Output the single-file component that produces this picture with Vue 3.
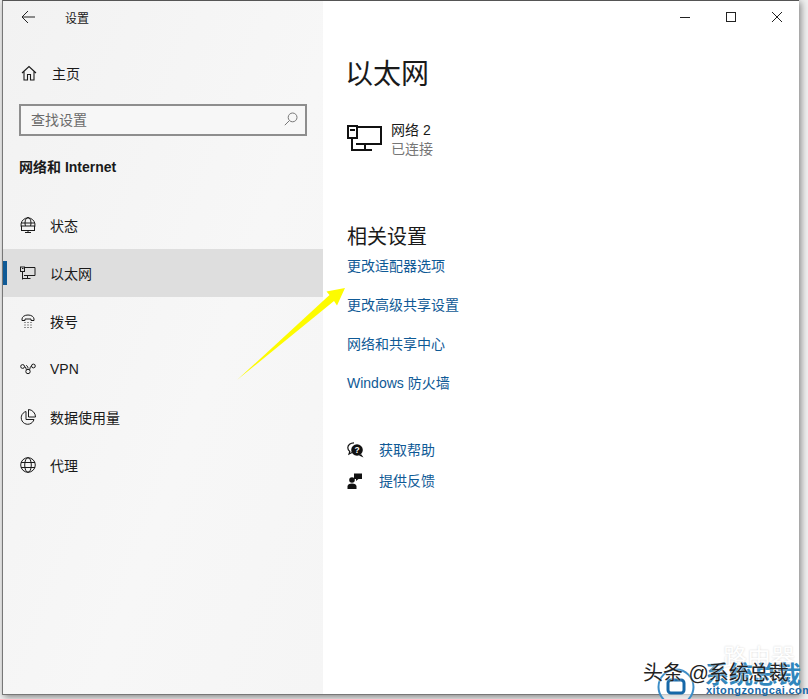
<script setup>
const navItems = [
  { key: 'status', label: '状态' },
  { key: 'ethernet', label: '以太网', active: true },
  { key: 'dial', label: '拨号' },
  { key: 'vpn', label: 'VPN' },
  { key: 'data', label: '数据使用量' },
  { key: 'proxy', label: '代理' },
]
const links = ['更改适配器选项', '更改高级共享设置', '网络和共享中心', 'Windows 防火墙']
</script>

<template>
  <div class="screen">
    <div class="window">
      <aside class="side">
        <div class="side-top">
          <svg class="back" width="14" height="14" viewBox="0 0 14 14"><path d="M7 1 1 7l6 6M1 7h13" fill="none" stroke="#222" stroke-width="1"/></svg>
          <span class="side-title">设置</span>
        </div>
        <div class="home">
          <svg width="16" height="16" viewBox="0 0 16 16"><path d="M1 8 8 1.500 15 8M3 6.500V15h3.500V9.500h3V15H13V6.500" fill="none" stroke="#1a1a1a" stroke-width="1.100"/></svg>
          <span>主页</span>
        </div>
        <div class="search">
          <span>查找设置</span>
          <svg width="14" height="14" viewBox="0 0 14 14"><circle cx="8.600" cy="5.400" r="4.400" fill="none" stroke="#777" stroke-width="1"/><path d="M5.400 8.600.8 13.200" stroke="#777" stroke-width="1"/></svg>
        </div>
        <div class="group">网络和 Internet</div>
        <nav class="nav">
          <div v-for="item in navItems" :key="item.key" class="nav-item" :class="{ active: item.active }">
            <svg v-if="item.key === 'status'" width="16" height="16" viewBox="0 0 16 16" fill="none" stroke="#1a1a1a" stroke-width="1"><path d="M2 11.500a7 7 0 1 1 12 0"/><ellipse cx="8" cy="6" rx="3" ry="5.500"/><path d="M1 6h14"/><rect x="1.500" y="9" width="13" height="4.500" fill="#f5f5f5"/><path d="M8 13.500V15.500M5 15.500h6"/></svg>
            <svg v-else-if="item.key === 'ethernet'" width="16" height="14" viewBox="0 0 16 14" fill="none" stroke="#1a1a1a" stroke-width="1"><path d="M5 1.500h10v8H4"/><rect x=".5" y="1" width="4" height="4.500"/><path d="M2 2.500h1.500M2.500 5.500V13.500M2.500 12.500h8M7.500 9.500v3"/></svg>
            <svg v-else-if="item.key === 'dial'" width="16" height="14" viewBox="0 0 16 14" fill="none" stroke="#1a1a1a" stroke-width="1"><path d="M2 6.500V5a6 4 0 0 1 12 0v1.500h-3V5H5v1.500z"/><path d="M4.500 8.500h1M7.500 8.500h1M10.500 8.500h1M4.500 11h1M7.500 11h1M10.500 11h1M4.500 13.500h1M7.500 13.500h1M10.500 13.500h1" stroke-width=".9"/></svg>
            <svg v-else-if="item.key === 'vpn'" width="16" height="12" viewBox="0 0 16 12" fill="none" stroke="#1a1a1a" stroke-width="1"><circle cx="2.600" cy="3.500" r="1.900"/><circle cx="13.400" cy="3" r="1.900"/><circle cx="8" cy="8.500" r="2.200"/><path d="M4.500 3.500c1.500 0 1.500 3 2 3.400M11.500 3c-1.500 0-1.500 3.500-2 3.900M6 2.500c1 0 2 1 2 3"/></svg>
            <svg v-else-if="item.key === 'data'" width="16" height="16" viewBox="0 0 16 16" fill="none" stroke="#1a1a1a" stroke-width="1"><path d="M6 2.500a6.500 6.500 0 1 0 8 8"/><path d="M6 2.500V10.500h8"/><path d="M8.500.5v7.500h7a7.500 7.500 0 0 0-7-7.500z"/></svg>
            <svg v-else width="16" height="16" viewBox="0 0 16 16" fill="none" stroke="#1a1a1a" stroke-width="1"><circle cx="8" cy="8" r="7.300"/><ellipse cx="8" cy="8" rx="3.300" ry="7.300"/><path d="M1 5.500h14M1 10.500h14"/></svg>
            <span class="nav-label">{{ item.label }}</span>
          </div>
        </nav>
      </aside>

      <main class="main">
        <div class="win-buttons">
          <svg width="10" height="10" viewBox="0 0 10 10"><path d="M0 5.500h10" stroke="#222"/></svg>
          <svg width="10" height="10" viewBox="0 0 10 10"><rect x=".5" y=".5" width="9" height="9" fill="none" stroke="#222"/></svg>
          <svg width="10" height="10" viewBox="0 0 10 10"><path d="M0 0l10 10M10 0 0 10" stroke="#222"/></svg>
        </div>
        <h1 class="title">以太网</h1>
        <div class="net">
          <svg class="net-icon" width="35" height="26" viewBox="0 0 35 26" fill="none" stroke="#111" stroke-width="2"><path d="M9 2h25v17H9"/><rect x="1" y="1" width="9" height="12"/><path d="M3 5h5"/><path d="M5 13v13M5 25h20M18 19v6"/></svg>
          <div>
            <div class="net-name">网络 2</div>
            <div class="net-state">已连接</div>
          </div>
        </div>
        <h2 class="related">相关设置</h2>
        <div class="links">
          <a v-for="l in links" :key="l">{{ l }}</a>
        </div>
        <div class="help">
          <div class="help-row">
            <svg width="17" height="16" viewBox="0 0 17 16"><path d="M7 .8C3.400.8.800 3 .800 5.800c0 1.500.8 2.800 2 3.700L2 12l3-1.500" fill="none" stroke="#111" stroke-width="1.200"/><circle cx="10" cy="8" r="5.800" fill="#111"/><path d="m14 12 2.500 3.500-4.500-2z" fill="#111"/><text x="10" y="11" font-size="8.500" font-weight="700" fill="#fff" text-anchor="middle" font-family="Liberation Sans, sans-serif">?</text></svg>
            <a>获取帮助</a>
          </div>
          <div class="help-row">
            <svg width="17" height="16" viewBox="0 0 17 16" fill="#111"><path d="M7 .5h8V6h-3.500L9 8V6H7z"/><circle cx="5" cy="7" r="2.800"/><path d="M.5 16v-2.500c0-2 1.800-3 4.500-3s4.500 1 4.500 3V16z"/></svg>
            <a>提供反馈</a>
          </div>
        </div>
      </main>
    </div>

    <svg class="arrow" width="110" height="100" viewBox="0 0 110 100"><path d="M1 96 93.500 11 90.500 7.500 109 4 101 21.500 98 17z" fill="#fdfb00"/></svg>

    <div class="mark">
      <svg class="mark-logo" width="40" height="34" viewBox="0 0 40 34"><circle cx="19" cy="19" r="17.500" fill="#fff" fill-opacity=".6" stroke="#3c8ec8" stroke-width="2"/><rect x="11" y="12" width="16" height="13" rx="3" fill="none" stroke="#1668a8" stroke-width="3"/></svg>
      <div class="mark-ghost">路由器</div>
      <div class="mark-blue">系统总裁</div>
      <div class="mark-url">xitongzongcai.com</div>
      <div class="mark-head">头条 @系统总裁</div>
    </div>
  </div>
</template>

<style>
html, body { margin: 0; background: #fff; }
</style>

<style scoped>
.screen {
  position: relative;
  width: 808px;
  height: 699px;
  overflow: hidden;
  background: #f0f0f0;
  font-family: "Liberation Sans", "Noto Sans CJK SC", sans-serif;
  color: #1a1a1a;
}
.window {
  display: flex;
  width: 797px;
  height: 695px;
  margin-left: 2px;
  border-top: 1px solid #555;
  border-left: 1px solid #777;
  border-bottom: 1px solid #777;
  background: #fff;
  box-sizing: border-box;
  box-shadow: 2px 2px 7px rgba(0, 0, 0, .45);
}
.side {
  width: 320px;
  flex: none;
  background: #f5f5f5;
  background-image: linear-gradient(110deg, #f2f2f2 0%, #f7f7f7 60%, #f5f5f5 100%);
}
.side-top {
  display: flex;
  align-items: center;
  height: 32px;
  padding-left: 18px;
}
.back { flex: none; }
.side-title { margin-left: 30px; font-size: 12px; }
.home {
  display: flex;
  align-items: center;
  gap: 15px;
  height: 20px;
  margin-top: 30px;
  padding-left: 18px;
  font-size: 14px;
}
.search {
  display: flex;
  align-items: center;
  justify-content: space-between;
  box-sizing: border-box;
  width: 288px;
  height: 32px;
  margin: 21px 0 0 16px;
  padding: 0 7px 2px 10px;
  border: 2px solid #8e8e8e;
  background: #f7f7f7;
  font-size: 14px;
  color: #6b6b6b;
}
.group {
  margin: 23px 0 0 16px;
  height: 16px;
  line-height: 16px;
  font-size: 14px;
  font-weight: 700;
}
.nav { margin-top: 26px; }
.nav-item {
  position: relative;
  display: flex;
  align-items: center;
  height: 48px;
  padding-left: 17px;
  font-size: 14px;
}
.nav-item svg { width: 16px; flex: none; }
.nav-label { margin-left: 14px; }
.nav-item.active { background: #dedede; }
.nav-item.active::before {
  content: "";
  position: absolute;
  left: 0;
  top: 12px;
  width: 4px;
  height: 24px;
  background: #0f5a96;
}
.main {
  position: relative;
  flex: 1;
  padding-left: 24px;
}
.win-buttons {
  position: absolute;
  top: 11px;
  right: 17px;
  display: flex;
  gap: 36px;
}
.title {
  margin: 54px 0 0 -2px;
  font-size: 28px;
  font-weight: 400;
  line-height: 40px;
}
.net {
  display: flex;
  align-items: flex-start;
  gap: 9px;
  margin-top: 26px;
}
.net-icon { margin-top: 4px; }
.net-name { font-size: 14px; line-height: 18px; }
.net-state { font-size: 14px; line-height: 20px; color: #767676; }
.related {
  margin: 64px 0 0;
  font-size: 20px;
  font-weight: 400;
  line-height: 28px;
}
.links { display: flex; flex-direction: column; gap: 21px; margin-top: 6px; }
.links a, .help a { color: #0f5a96; font-size: 14px; line-height: 18px; }
.help { margin-top: 49px; display: flex; flex-direction: column; gap: 13px; }
.help-row { display: flex; align-items: center; gap: 15px; height: 18px; }
.arrow { position: absolute; left: 236px; top: 284px; }
.mark { position: absolute; left: 630px; top: 640px; width: 178px; height: 59px; }
.mark-logo { position: absolute; left: 27px; top: 28px; }
.mark-ghost { position: absolute; left: 93px; top: -2px; font-size: 24px; letter-spacing: 0; color: #fff; text-shadow: 0 0 2px rgba(0,0,0,.18); white-space: nowrap; }
.mark-blue { position: absolute; left: 75px; top: 23px; font-size: 24px; line-height: 24px; font-weight: 700; color: #2f86bd; white-space: nowrap; }
.mark-url { position: absolute; left: 76px; top: 43px; font-size: 11px; line-height: 14px; font-weight: 700; letter-spacing: .4px; color: #1668a8; white-space: nowrap; }
.mark-head { position: absolute; left: 13px; top: 21px; font-size: 20px; line-height: 24px; color: #222; text-shadow: 0 0 2px #fff; white-space: nowrap; }
</style>
